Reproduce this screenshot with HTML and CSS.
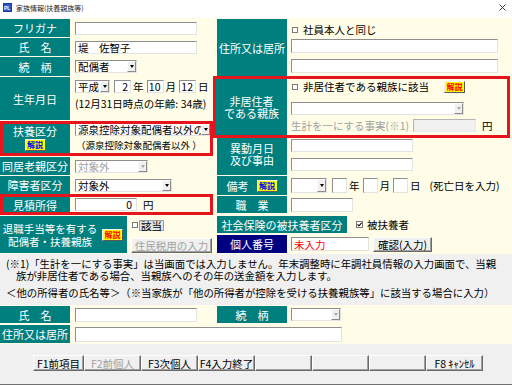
FILE: index.html
```html
<!DOCTYPE html>
<html lang="ja">
<head>
<meta charset="utf-8">
<title>家族情報(扶養親族等)</title>
<link rel="stylesheet" href="styles.css">
</head>
<body>
<div class="win">
  <div class="titlebar">
    <svg class="appicon" width="9" height="9" viewBox="0 0 9 9"><rect x="0.5" y="0.5" width="8" height="8" fill="#2f55c8" stroke="#1a3a9a"/><text x="1" y="6.6" font-size="5" font-family="Liberation Sans" font-weight="bold" fill="#fff">PL</text></svg>
    <span class="ttl">家族情報(扶養親族等)</span>
    <svg class="close" width="7" height="7" viewBox="0 0 7 7"><path d="M0.5 0.5L6.5 6.5M6.5 0.5L0.5 6.5" stroke="#333" stroke-width="1"/></svg>
  </div>

  <div class="form">
    <div class="colL">
      <div class="row h18 mb1"><div class="lbl">フリガナ</div><div class="cell"><span class="tb w122"></span></div></div>
      <div class="row h18 mb1"><div class="lbl">氏　名</div><div class="cell"><span class="tb w122">堤　佐智子</span></div></div>
      <div class="row h19 mb1"><div class="lbl">続　柄</div><div class="cell"><span class="sel w62"><span class="v">配偶者</span><span class="arr"></span></span></div></div>
      <div class="row h43 mb1"><div class="lbl">生年月日</div>
        <div class="cell stack birth">
          <div class="line">
            <span class="sel w35"><span class="v">平成</span><span class="arr"></span></span>
            <span class="tb num w17 ml4">2</span><span class="u">年</span>
            <span class="tb num w17">10</span><span class="u">月</span>
            <span class="tb num w17">12</span><span class="u">日</span>
          </div>
          <div class="age">(12月31日時点の年齢: 34歳)</div>
        </div>
      </div>
      <div class="row h35 redin">
        <div class="lbl stackl"><span>扶養区分</span><span class="kai b">解説</span></div>
        <div class="cell stack fuyo">
          <span class="sel w136"><span class="v clip">源泉控除対象配偶者以外の配偶者</span><span class="arr"></span></span>
          <div class="sub">（源泉控除対象配偶者以外 ）</div>
        </div>
      </div>
      <div class="row h18 mt1 mb1"><div class="lbl">同居老親区分</div><div class="cell"><span class="sel dis w73"><span class="v">対象外</span><span class="arr"></span></span></div></div>
      <div class="row h18"><div class="lbl">障害者区分</div><div class="cell"><span class="sel w97"><span class="v">対象外</span><span class="arr"></span></span></div></div>
      <div class="row h21 redin"><div class="lbl">見積所得</div><div class="cell"><span class="tb num w62 pr4">0</span><span class="yen">円</span></div></div>
      <div class="row h37 mt1">
        <div class="lbl wide"><span class="tt">退職手当等を有する<br>配偶者・扶養親族</span><span class="kai r">解説</span></div>
        <div class="cell stack taisho">
          <div class="chk"><span class="cb"></span><span class="gai">該当</span></div>
          <span class="btn dis w81 mt7">住民税用の入力</span>
        </div>
      </div>
    </div>

    <div class="colR">
      <div class="row h57">
        <div class="lbl">住所又は居所</div>
        <div class="cell stack addr">
          <div class="chk"><span class="cb"></span>社員本人と同じ</div>
          <span class="tb w207 h14 mt3"></span>
          <span class="tb w207 h14 mt6"></span>
        </div>
      </div>
      <div class="row h56 hiky">
        <div class="lbl two w71">非居住者<br>である親族</div>
        <div class="cell stack hk">
          <div class="chk"><span class="cb"></span><span class="hkt">非居住者である親族に該当</span><span class="kai r">解説</span></div>
          <span class="sel garr w173 mt9"><span class="v"></span><span class="arr"></span></span>
          <div class="line mt4"><span class="gray w122">生計を一にする事実(※1)</span><span class="tb dis w63"></span><span class="yen">円</span></div>
        </div>
      </div>
      <div class="row h37 mt3 mb1">
        <div class="lbl two up">異動月日<br>及び事由</div>
        <div class="cell stack ido">
          <span class="tb w122"></span>
          <span class="tb w122 mt6"></span>
        </div>
      </div>
      <div class="row h19 mb1">
        <div class="lbl gap8"><span>備考</span><span class="kai b">解説</span></div>
        <div class="cell">
          <span class="sel w36 h15"><span class="v"></span><span class="arr"></span></span>
          <span class="tb w15 h15 ml5"></span><span class="u">年</span>
          <span class="tb w15 h15"></span><span class="u">月</span>
          <span class="tb w15 h15"></span><span class="u">日</span>
          <span class="death">(死亡日を入力)</span>
        </div>
      </div>
      <div class="row h17 mb3"><div class="lbl">職　業</div><div class="cell"><span class="tb w62 h14"></span></div></div>
      <div class="row h17 mb2">
        <div class="lbl w130">社会保険の被扶養者区分</div>
        <div class="cell pl8"><span class="cb on"><svg width="5" height="5" viewBox="0 0 5 5"><path d="M0.5 2.3L2 3.8L4.6 0.8" fill="none" stroke="#000" stroke-width="1.1"/></svg></span>被扶養者</div>
      </div>
      <div class="row h18">
        <div class="lbl navy">個人番号</div>
        <div class="cell"><span class="tb w78 h14 red">未入力</span><span class="btn w59 ml4">確認(入力)</span></div>
      </div>
    </div>
  </div>

  <div class="notes">
    <p>(※1)「生計を一にする事実」は当画面では入力しません。年末調整時に年調社員情報の入力画面で、当親</p>
    <p class="ind">族が非居住者である場合、当親族へのその年の送金額を入力します。</p>
    <p class="other">＜他の所得者の氏名等＞（※当家族が「他の所得者が控除を受ける扶養親族等」に該当する場合に入力）</p>
  </div>

  <div class="form2">
    <div class="row h17 mb2">
      <div class="lbl">氏　名</div>
      <div class="cell w147"><span class="tb w122 h14"></span></div>
      <div class="lbl">続　柄</div>
      <div class="cell pl4"><span class="sel garr w50"><span class="v"></span><span class="arr"></span></span></div>
    </div>
    <div class="row h18"><div class="lbl">住所又は居所</div><div class="cell"><span class="tb w267 h15"></span></div></div>
  </div>

  <div class="fkeys">
    <span class="btn fk1">F1前項目</span>
    <span class="btn dis">F2前個人</span>
    <span class="btn">F3次個人</span>
    <span class="btn">F4入力終了</span>
    <span class="btn"></span>
    <span class="btn"></span>
    <span class="btn"></span>
    <span class="btn">F8 ｷｬﾝｾﾙ</span>
  </div>
</div>
</body>
</html>
```

FILE: styles.css
```css
* { box-sizing: border-box; margin: 0; padding: 0; }
html, body { width: 512px; height: 385px; overflow: hidden; }
body {
  background: #f0f0f0;
  font-family: "Noto Sans CJK JP", "Noto Sans", sans-serif;
  font-size: 10.5px;
  line-height: 12px;
  color: #000;
}
.win { height: 385px; display: flex; flex-direction: column; border-bottom: 1px solid #707070; }

/* title bar */
.titlebar { height: 18px; flex: none; background: #fff; display: flex; align-items: center; padding-left: 3px; }
.appicon { display: block; margin-top: -3px; }
.ttl { font-size: 7px; line-height: 8px; margin-left: 4px; margin-top: -3px; color: #222; }
.close { display: block; margin-left: auto; margin-right: 6px; margin-top: -4px; }

/* main form */
.form { flex: none; height: 236px; background: #fffde7; padding-top: 1px; display: flex; gap: 4px; }
.colL { width: 213px; flex: none; display: flex; flex-direction: column; }
.colR { flex: 1; display: flex; flex-direction: column; }

.row { display: flex; flex: none; }
.h17 { height: 17px; } .h18 { height: 18px; } .h19 { height: 19px; } .h21 { height: 21px; }
.h35 { height: 35px; } .h37 { height: 37px; } .h43 { height: 43px; } .h56 { height: 56px; } .h57 { height: 57px; }
.mb1 { margin-bottom: 1px; } .mb2 { margin-bottom: 2px; } .mb3 { margin-bottom: 3px; }
.mt1 { margin-top: 1px; } .mt3 { margin-top: 3px; } .mt4 { margin-top: 4px; } .mt6 { margin-top: 6px; }
.mt7 { margin-top: 7px; } .mt9 { margin-top: 9px; }
.ml4 { margin-left: 4px; } .ml5 { margin-left: 5px; }

.lbl {
  flex: none; width: 70px;
  background: #007f7f; color: #fff;
  font-size: 11px; line-height: 12px;
  display: flex; align-items: center; justify-content: center;
  text-align: center; white-space: nowrap;
}
.lbl.navy { background: #000080; }
.lbl.w71 { width: 71px; }
.lbl.w130 { width: 130px; }
.lbl.two { line-height: 12px; }
.lbl.up { padding-bottom: 5px; }
.lbl.gap8 { gap: 8px; }
.lbl.stackl { flex-direction: column; justify-content: flex-start; padding-top: 4px; gap: 2px; }
.lbl.wide { width: 127px; justify-content: flex-start; }
.lbl.wide .tt { width: 100px; text-align: center; font-size: 10.5px; line-height: 13px; }
.lbl.wide .kai { margin-left: 2px; }

.cell { flex: 1; min-width: 0; display: flex; align-items: center; padding-left: 5px; white-space: nowrap; }
.colR .cell { padding-left: 4px; }
.cell.pl4 { padding-left: 4px; }
.cell.pl8 { padding-left: 8px; }
.cell.w147 { flex: none; width: 147px; }
.stack { flex-direction: column; align-items: flex-start; justify-content: flex-start; }
.line { display: flex; align-items: center; height: 13px; }

/* text boxes */
.tb {
  flex: none; display: flex; align-items: center;
  height: 13px; padding: 0 2px;
  background: #fff;
  border: 1px solid; border-color: #8e8e8e #e3e3e3 #e3e3e3 #8e8e8e;
  line-height: 11px; white-space: nowrap;
}
.tb.num { justify-content: flex-end; }
.tb.pr4 { padding-right: 4px; }
.tb.dis { background: #f0f0f0; border-color: #b4b4b4 #e8e8e8 #e8e8e8 #b4b4b4; }
.tb.red { color: #f00; }
.h14 { height: 14px !important; } .h15 { height: 15px !important; }
.w15 { width: 15px; } .w17 { width: 17px; } .w35 { width: 35px; } .w36 { width: 36px; } .w50 { width: 50px; }
.w59 { width: 59px; } .w62 { width: 62px; } .w63 { width: 63px; } .w73 { width: 73px; } .w78 { width: 78px; }
.w81 { width: 81px; } .w97 { width: 97px; } .w122 { width: 122px; } .w136 { width: 136px; } .w173 { width: 173px; }
.w207 { width: 207px; } .w267 { width: 267px; }

/* selects */
.sel {
  flex: none; display: flex; align-items: stretch;
  height: 13px; background: #fff;
  border: 1px solid; border-color: #8e8e8e #e3e3e3 #e3e3e3 #8e8e8e;
}
.sel .v { flex: 1; min-width: 0; padding-left: 2px; display: flex; align-items: center; white-space: nowrap; line-height: 11px; }
.sel .v.clip { overflow: hidden; }
.sel .arr {
  flex: none; width: 9px;
  background: #f0f0f0;
  border: 1px solid; border-color: #fcfcfc #8a8a8a #8a8a8a #fcfcfc;
  display: flex; align-items: center; justify-content: center;
}
.sel .arr::after {
  content: ""; width: 0; height: 0;
  border-left: 2px solid transparent; border-right: 2px solid transparent;
  border-top: 3px solid #000;
}
.sel.dis .v { color: #a0a0a0; }
.sel.dis .arr::after, .sel.garr .arr::after { border-top-color: #a8a8a8; }

.u { margin: 0 3px 0 2px; line-height: 13px; }
.yen { margin-left: 6px; }
.gray { color: #a0a0a0; flex: none; }
.death { margin-left: 6px; }

/* red frames */
.redin { outline: 3px solid #e8141c; outline-offset: -3px; }
.hiky { margin-top: 3px; margin-left: -1px; width: 291px; outline: 3px solid #e8141c; }

/* rows specifics */
.birth { padding-top: 3px; }
.age { margin-top: 5px; }
.fuyo { padding-top: 2px; }
.sub { margin-top: 3px; margin-left: 1px; font-size: 9.5px; }
.taisho { padding-top: 3px; padding-left: 4px; }
.addr { padding-top: 5px; }
.hk { padding-top: 2px; }
.hkt { width: 141px; flex: none; }
.ido { padding-top: 1px; }

/* checkbox */
.chk { display: flex; align-items: center; height: 12px; }
.cb {
  flex: none; width: 6px; height: 6px;
  background: #fff; border: 1px solid #7a7a7a;
  margin-right: 5px; margin-left: 1px;
  display: flex; align-items: center; justify-content: center;
}
.cb.on { width: 7px; height: 7px; margin-right: 4px; }
.cb.on svg { display: block; }
.taisho .cb { margin-right: 1px; }
.gai { background: #e4e4e4; border: 1px solid #a0a0a0; padding: 0 1px; height: 11px; line-height: 9px; display: flex; align-items: center; }

/* yellow help buttons */
.kai {
  flex: none; display: inline-flex; align-items: center; justify-content: center;
  width: 21px; height: 12px;
  background: #ffff00;
  border: 1px solid; border-color: #f4f4f4 #5a5a5a #5a5a5a #f4f4f4;
  font-size: 8px; line-height: 8px; font-weight: bold;
}
.kai.r { color: #f00; }
.kai.b { color: #0000ff; }

/* buttons */
.btn {
  flex: none; display: flex; align-items: center; justify-content: center;
  height: 15px;
  background: #f0f0f0;
  border: 1px solid; border-color: #fff #696969 #696969 #fff;
  box-shadow: inset -1px -1px 0 #a0a0a0;
  font-size: 10.5px; line-height: 11px; white-space: nowrap; color: #000;
}
.btn.dis { color: #a0a0a0; }

/* notes */
.notes { flex: none; padding: 4px 0 0 6px; font-size: 10.4px; line-height: 12px; white-space: nowrap; }
.notes .ind { padding-left: 10px; }
.notes .other { margin-top: 5px; }

/* lower form */
.form2 { flex: none; margin-top: 6px; background: #fffde7; padding: 1px 0; }

/* function keys */
.fkeys { flex: none; display: flex; margin: 11px 0 0 33px; height: 16px; }
.fkeys .btn { width: 57px; height: 16px; }
.fkeys .fk1 { width: 51px; }
```
